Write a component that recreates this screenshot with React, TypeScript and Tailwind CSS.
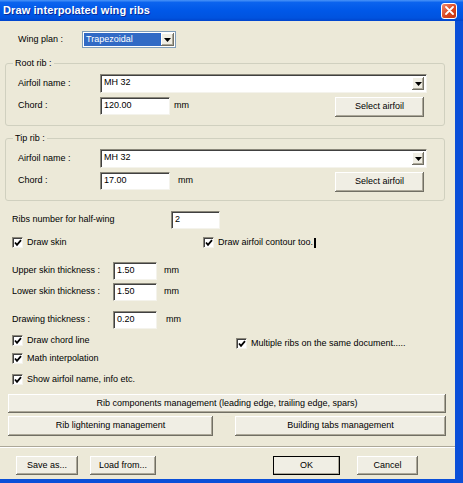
import React from 'react';

const FONT = "font-['Liberation_Sans',Arial,sans-serif]";

const raised =
  'bg-[#F0EEE4] shadow-[inset_-1px_-1px_#716F64,inset_1px_1px_#FFFFFF,inset_-2px_-2px_#ACA899]';
const sunken =
  'bg-white border border-t-[#8A877A] border-l-[#8A877A] border-r-[#F4F3EC] border-b-[#F4F3EC] shadow-[inset_1px_1px_#404040]';

const Button: React.FC<{ label: string; className?: string; isDefault?: boolean }> = ({ label, className = '', isDefault }) => (
  <div
    className={`flex items-center justify-center ${raised} ${isDefault ? 'outline outline-1 outline-black -outline-offset-1' : ''} ${className}`}
  >
    {label}
  </div>
);

const TextBox: React.FC<{ value: string; className?: string }> = ({ value, className = '' }) => (
  <div className={`${sunken} h-[18px] px-[3px] pt-[1px] leading-[13px] ${className}`}>{value}</div>
);

const Arrow: React.FC = () => (
  <svg width="7" height="4" viewBox="0 0 7 4">
    <path d="M0 0 H7 L3.5 4 Z" fill="#000" />
  </svg>
);

const ComboBox: React.FC<{ value: string; className?: string }> = ({ value, className = '' }) => (
  <div className={`${sunken} h-[19px] flex items-center pl-[3px] pr-[2px] ${className}`}>
    <span className="flex-1 leading-[13px] -mt-[2px]">{value}</span>
    <div className={`w-[12px] h-[13px] flex items-center justify-center ${raised}`}>
      <Arrow />
    </div>
  </div>
);

const Checkbox: React.FC<{ label: string; className?: string; caret?: boolean }> = ({ label, className = '', caret }) => (
  <div className={`flex items-center h-[13px] ${className}`}>
    <div className={`${sunken} w-[11px] h-[11px] flex items-center justify-center`}>
      <svg width="8" height="8" viewBox="0 0 8 8">
        <path d="M1 3.5 L3 5.8 L7 1.2" stroke="#000" strokeWidth="1.8" fill="none" />
      </svg>
    </div>
    <span className="ml-[4px]">{label}</span>
    {caret && <span className="ml-[1px] w-[2px] h-[10px] bg-black" />}
  </div>
);

const RibGroup: React.FC<{ title: string; chord: string; mmGap: string; className?: string }> = ({ title, chord, mmGap, className = '' }) => (
  <div className={`ml-[5px] w-[440px] h-[63px] border border-[#D0D0BF] rounded-[3px] flex flex-col ${className}`}>
    <span className="-mt-[6px] ml-[7px] px-[2px] w-fit h-[11px] leading-[11px] bg-[#ECE9D8]">{title}</span>
    <div className="flex items-center h-[19px] mt-[5px]">
      <span className="ml-[12px] w-[82px]">Airfoil name :</span>
      <ComboBox value="MH 32" className="w-[327px]" />
    </div>
    <div className="flex items-start h-[20px] mt-[4px]">
      <span className="ml-[12px] w-[82px] h-[18px] flex items-center">Chord :</span>
      <TextBox value={chord} className="w-[70px]" />
      <span className={`h-[18px] flex items-center ${mmGap}`}>mm</span>
      <Button label="Select airfoil" className="ml-auto mr-[20px] w-[89px] h-[20px]" />
    </div>
  </div>
);

export default function App() {
  return (
    <div className={`w-[463px] h-[483px] bg-[#0A4FD8] flex flex-col text-[9px] text-black ${FONT}`}>
      {/* title bar */}
      <div className="h-[21px] flex items-center bg-[linear-gradient(to_bottom,#4A94F8_0%,#0B63EE_12%,#0058E8_50%,#0053DF_85%,#0044CC_100%)]">
        <span className="ml-[3px] text-[11px] font-bold text-white tracking-[0.1px] [text-shadow:1px_1px_#0A2C9A]">
          Draw interpolated wing ribs
        </span>
        <div className="ml-auto mr-[6px] w-[16px] h-[16px] rounded-[3px] border border-white bg-[linear-gradient(to_bottom_right,#F08A6E,#D9461F_55%,#C23512)] flex items-center justify-center">
          <svg width="9" height="9" viewBox="0 0 9 9">
            <path d="M1 1 L8 8 M8 1 L1 8" stroke="#fff" strokeWidth="1.8" strokeLinecap="round" />
          </svg>
        </div>
      </div>

      {/* client area */}
      <div className="w-[455px] h-[458px] bg-[#ECE9D8] flex flex-col">
        <div className="flex items-center h-[17px] mt-[10px]">
          <span className="ml-[18px] w-[64px]">Wing plan :</span>
          <div className="w-[94px] h-[17px] bg-white border border-[#7F9DB9] flex items-center p-[1px]">
            <span className="w-[78px] h-[13px] bg-[#316AC5] text-white pl-[2px] leading-[13px]">Trapezoidal</span>
            <div className={`ml-auto w-[13px] h-[13px] flex items-center justify-center ${raised}`}>
              <Arrow />
            </div>
          </div>
        </div>

        <RibGroup title="Root rib :" chord="120.00" mmGap="ml-[4px]" className="mt-[15px]" />
        <RibGroup title="Tip rib :" chord="17.00" mmGap="ml-[8px]" className="mt-[12px]" />

        <div className="flex items-center h-[18px] mt-[10px]">
          <span className="ml-[12px] w-[159px]">Ribs number for half-wing</span>
          <TextBox value="2" className="w-[49px]" />
        </div>

        <div className="flex items-center h-[13px] mt-[7px]">
          <Checkbox label="Draw skin" className="ml-[12px] w-[191px]" />
          <Checkbox label="Draw airfoil contour too." caret />
        </div>

        <div className="flex items-center h-[18px] mt-[13px]">
          <span className="ml-[12px] w-[101px]">Upper skin thickness :</span>
          <TextBox value="1.50" className="w-[44px]" />
          <span className="ml-[7px]">mm</span>
        </div>
        <div className="flex items-center h-[18px] mt-[3px]">
          <span className="ml-[12px] w-[101px]">Lower skin thickness :</span>
          <TextBox value="1.50" className="w-[44px]" />
          <span className="ml-[7px]">mm</span>
        </div>
        <div className="flex items-center h-[18px] mt-[10px]">
          <span className="ml-[12px] w-[101px]">Drawing thickness :</span>
          <TextBox value="0.20" className="w-[44px]" />
          <span className="ml-[9px]">mm</span>
        </div>

        <div className="flex mt-[5px]">
          <div className="ml-[12px] w-[224px] flex flex-col">
            <Checkbox label="Draw chord line" />
            <Checkbox label="Math interpolation" className="mt-[5px]" />
            <Checkbox label="Show airfoil name, info etc." className="mt-[8px]" />
          </div>
          <Checkbox label="Multiple ribs on the same document....." className="mt-[3px]" />
        </div>

        <Button
          label="Rib components management (leading edge, trailing edge, spars)"
          className="mt-[8px] ml-[8px] w-[438px] h-[19px]"
        />
        <div className="flex mt-[3px] h-[20px]">
          <Button label="Rib lightening management" className="ml-[8px] w-[205px]" />
          <Button label="Building tabs management" className="ml-[22px] w-[211px]" />
        </div>

        <div className="mt-[10px] h-[2px] border-t border-t-[#ACA899] border-b border-b-white" />

        <div className="flex mt-[8px] h-[19px]">
          <Button label="Save as..." className="ml-[16px] w-[62px]" />
          <Button label="Load from..." className="ml-[12px] w-[66px]" />
          <Button label="OK" isDefault className="ml-[117px] w-[67px]" />
          <Button label="Cancel" className="ml-[17px] w-[61px]" />
        </div>
      </div>
    </div>
  );
}
